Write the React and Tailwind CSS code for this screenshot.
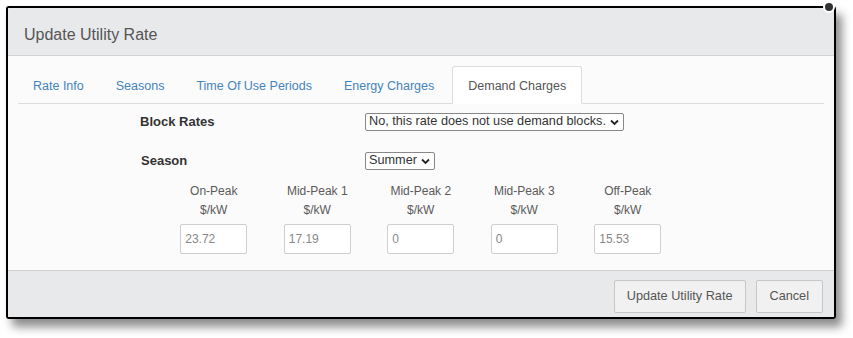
import React from "react";

const Chevron = () => (
  <svg width="9" height="7" viewBox="0 0 9 7" className="ml-[4px]">
    <path d="M1 1.5 L4.5 5 L8 1.5" fill="none" stroke="#222" strokeWidth="1.8" />
  </svg>
);

const cols = [
  { name: "On-Peak", val: "23.72" },
  { name: "Mid-Peak 1", val: "17.19" },
  { name: "Mid-Peak 2", val: "0" },
  { name: "Mid-Peak 3", val: "0" },
  { name: "Off-Peak", val: "15.53" },
];

export default function App() {
  return (
    <div className="w-[853px] h-[338px] bg-white relative font-['Liberation_Sans',Arial,sans-serif] overflow-hidden">
      <div className="absolute left-[6px] top-[6px] w-[830px] h-[313px] border-2 border-black rounded-[3px] bg-[#fbfbfb] shadow-[6px_8px_10px_rgba(0,0,0,0.45)] flex flex-col overflow-hidden">
        <div className="h-[48px] shrink-0 bg-[#e8e9eb] border-b border-[#d3d4d6] flex items-center pl-[16px] pt-[7px] text-[16px] text-[#555]">
          Update Utility Rate
        </div>
        <div className="px-[10px] pt-[10px]">
          <div className="flex border-b border-[#dddddd] h-[38px] text-[12.5px] text-[#4584bb]">
            {["Rate Info", "Seasons", "Time Of Use Periods", "Energy Charges"].map((t) => (
              <div key={t} className="px-[15px] pt-[3px] flex items-center mr-[2px]">{t}</div>
            ))}
            <div className="px-[15px] pt-[3px] ml-[1px] flex items-center bg-white border border-[#dddddd] border-b-white -mb-px rounded-t-[3px] text-[#555]">
              Demand Charges
            </div>
          </div>
        </div>
        <div className="flex-1 text-[#444]">
          <div className="flex items-center mt-[9px] h-[18px]">
            <div className="w-[357px] pl-[132px] text-[13px] font-bold text-[#333]">Block Rates</div>
            <div className="h-[18px] border border-[#888] rounded-[2px] bg-white flex items-center pl-[3px] pr-[4px] text-[12.7px] text-[#333]">
              No, this rate does not use demand blocks.
              <Chevron />
            </div>
          </div>
          <div className="flex items-center mt-[21px] h-[18px]">
            <div className="w-[357px] pl-[133px] text-[13px] font-bold text-[#333]">Season</div>
            <div className="h-[18px] border border-[#888] rounded-[2px] bg-white flex items-center pl-[3px] pr-[4px] text-[12.7px] text-[#333]">
              Summer
              <Chevron />
            </div>
          </div>
          <div className="flex pl-[154px] mt-[12px]">
            {cols.map((c) => (
              <div key={c.name} className="w-[103.5px] flex flex-col items-center text-[12px] text-[#5a5a5a]">
                <div className="leading-[19px]">{c.name}</div>
                <div className="leading-[19px]">$/kW</div>
                <div className="mt-[4px] w-[67px] h-[30px] border border-[#cfcfcf] rounded-[2px] bg-white flex items-center pl-[4px] text-[12px] text-[#888]">
                  {c.val}
                </div>
              </div>
            ))}
          </div>
        </div>
        <div className="h-[47px] shrink-0 bg-[#e8e9eb] border-t border-[#cfd0d2] flex items-center justify-end pr-[11px] pt-[5px] gap-[10px]">
          <div className="h-[33px] px-[12px] border border-[#c6c6c6] rounded-[2px] bg-[#f1f1f1] flex items-center text-[12.7px] text-[#555]">
            Update Utility Rate
          </div>
          <div className="h-[33px] px-[13px] border border-[#c6c6c6] rounded-[2px] bg-[#f1f1f1] flex items-center text-[12.7px] text-[#555]">
            Cancel
          </div>
        </div>
      </div>
      <div className="absolute left-[823px] top-[1px] w-[12px] h-[12px] rounded-full bg-[#333] border-2 border-white" />
    </div>
  );
}
